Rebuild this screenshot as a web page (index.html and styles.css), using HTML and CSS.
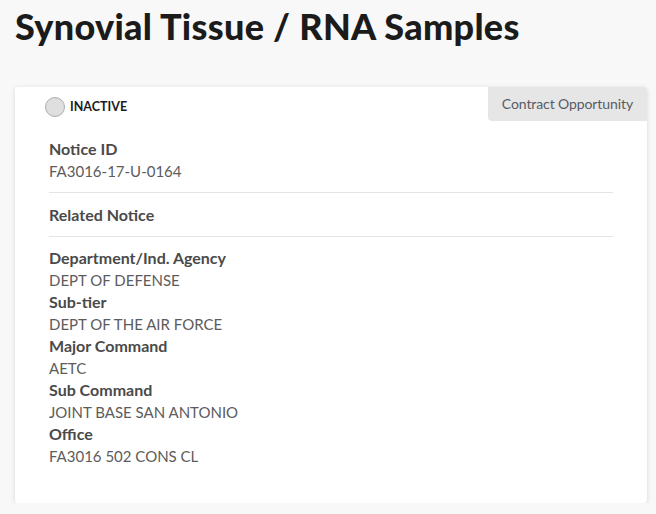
FILE: index.html
```html
<!DOCTYPE html>
<html>
<head>
<meta charset="utf-8">
<link rel="stylesheet" href="styles.css">
</head>
<body>
<h1 class="title">Synovial Tissue / RNA Samples</h1>
<div class="card">
  <div class="card-head">
    <div class="status"><span class="dot"></span><span class="status-text">INACTIVE</span></div>
    <div class="tab">Contract Opportunity</div>
  </div>
  <div class="card-body">
    <div class="label">Notice ID</div>
    <div class="value">FA3016-17-U-0164</div>
    <hr class="sep">
    <div class="label">Related Notice</div>
    <hr class="sep">
    <div class="label">Department/Ind. Agency</div>
    <div class="value">DEPT OF DEFENSE</div>
    <div class="label">Sub-tier</div>
    <div class="value">DEPT OF THE AIR FORCE</div>
    <div class="label">Major Command</div>
    <div class="value">AETC</div>
    <div class="label">Sub Command</div>
    <div class="value">JOINT BASE SAN ANTONIO</div>
    <div class="label">Office</div>
    <div class="value">FA3016 502 CONS CL</div>
  </div>
</div>
</body>
</html>
```

FILE: styles.css
```css
html, body {
  margin: 0;
  padding: 0;
  background: #f8f8f8;
  font-family: "Lato", "Open Sans", sans-serif;
}
body {
  padding: 0 9px 0 15px;
}
.title {
  margin: 0;
  padding-top: 5px;
  font-size: 36px;
  letter-spacing: 0.3px;
  line-height: 42px;
  font-weight: 900;
  color: #1b1b1b;
  height: 87px;
  box-sizing: border-box;
}
.card {
  width: 632px;
  background: #fff;
  border-radius: 3px;
  box-shadow: 0 1px 5px rgba(0, 0, 0, 0.13);
  overflow: hidden;
}
.card-head {
  display: flex;
  justify-content: space-between;
  align-items: flex-start;
  height: 34px;
}
.status {
  display: flex;
  align-items: center;
  padding: 10px 0 0 30px;
  gap: 5px;
}
.dot {
  width: 18px;
  height: 18px;
  border-radius: 50%;
  background: #dfdfdf;
  border: 1px solid #a9aeb1;
}
.status-text {
  font-size: 12.5px;
  font-weight: 700;
  color: #1b1b1b;
  line-height: 20px;
}
.tab {
  background: #e6e6e6;
  color: #565c65;
  font-size: 14px;
  letter-spacing: -0.1px;
  height: 34px;
  line-height: 34px;
  padding: 0 14px;
  border-bottom-left-radius: 4px;
}
.card-body {
  padding: 17px 34px 36px;
}
.label, .value {
  font-size: 15px;
  line-height: 22px;
}
.label {
  font-size: 16px;
  font-weight: 700;
  color: #4a4a4a;
}
.value {
  color: #5c5c5c;
}
.sep {
  border: 0;
  border-top: 1px solid #e4e4e4;
  margin: 10px 0 10.5px;
}
```
